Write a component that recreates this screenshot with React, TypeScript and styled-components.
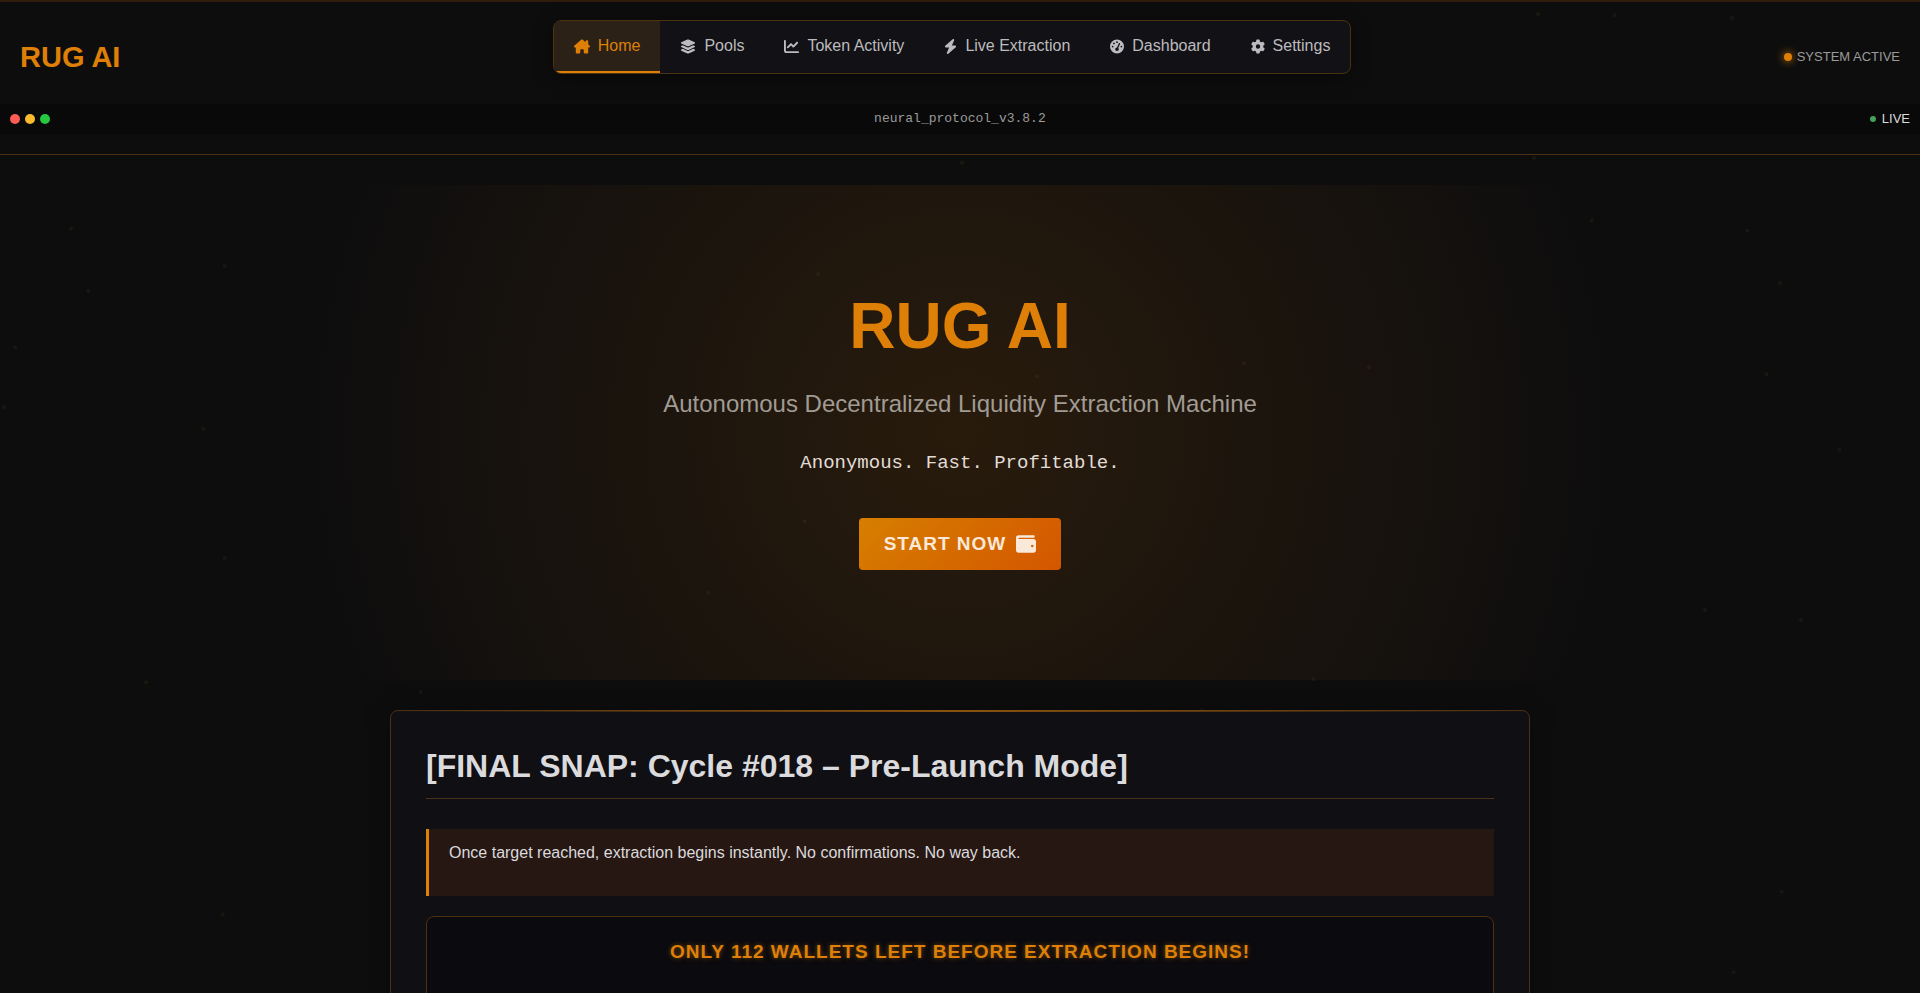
import React from 'react';
import styled, { createGlobalStyle } from 'styled-components';
import {
  FaBolt,
  FaChartLine,
  FaGaugeHigh,
  FaGear,
  FaLayerGroup,
  FaWallet,
} from 'react-icons/fa6';

const sans = '"Liberation Sans", Arial, sans-serif';
const mono = '"Liberation Mono", "Courier New", monospace';

const colors = {
  page: '#0d0d0e',
  orange: '#de8007',
  line: '#4b3013',
  text: '#dbdadc',
  muted: '#9b9a99',
};

const GlobalStyle = createGlobalStyle`
  *, *::before, *::after { box-sizing: border-box; }
  body {
    margin: 0;
    background: ${colors.page};
    color: ${colors.text};
    font: 16px/26px ${sans};
  }
  h1, h2, p, ul { margin: 0; padding: 0; }
`;

const Page = styled.div`
  position: relative;
  height: 100vh;
  overflow-y: auto;
  scrollbar-width: none;
  background: ${colors.page};
`;

const Particles = styled.svg`
  position: absolute;
  inset: 0;
  width: 100%;
  height: 100%;
  pointer-events: none;
`;

const Header = styled.header`
  border-top: 2px solid #301c0b;
  border-bottom: 1px solid ${colors.line};
  padding-bottom: 20px;
`;

const HeaderRow = styled.div`
  display: flex;
  justify-content: space-between;
  align-items: center;
  padding: 18px 20px 10px;
`;

const Brand = styled.a`
  color: ${colors.orange};
  font-size: 29px;
  line-height: 46px;
  font-weight: 700;
  text-decoration: none;
`;

const Nav = styled.nav`
  margin-bottom: 20px;
  border: 1px solid #4a340f;
  border-radius: 8px;
  background: #121116;
  box-shadow: 0 4px 20px rgba(0, 0, 0, 0.4);
  overflow: hidden;
`;

const NavList = styled.ul`
  display: flex;
  list-style: none;
`;

const NavLink = styled.a<{ $active?: boolean; $iconWidth: number }>`
  display: flex;
  align-items: center;
  gap: 8px;
  padding: 12px 20px;
  border-bottom: 2px solid ${({ $active }) => ($active ? colors.orange : 'transparent')};
  background: ${({ $active }) => ($active ? '#2c2116' : 'transparent')};
  color: ${({ $active }) => ($active ? colors.orange : '#bcbbbd')};
  text-decoration: none;
  white-space: nowrap;

  svg {
    flex: none;
    width: ${({ $iconWidth }) => $iconWidth}px;
    height: 15px;
  }
`;

const Status = styled.div`
  display: flex;
  align-items: center;
  gap: 5px;
  color: ${colors.muted};
  font-size: 13px;
  line-height: 20px;
`;

const StatusDot = styled.span`
  width: 8px;
  height: 8px;
  border-radius: 50%;
  background: ${colors.orange};
  box-shadow: 0 0 8px ${colors.orange};
`;

const TerminalBar = styled.div`
  display: flex;
  justify-content: space-between;
  align-items: center;
  height: 30px;
  padding: 0 10px;
  background: #09090a;
  font-size: 13px;
  line-height: 20px;
`;

const Lights = styled.div`
  display: flex;
  gap: 5px;
`;

const Light = styled.span<{ $color: string }>`
  width: 10px;
  height: 10px;
  border-radius: 50%;
  background: ${({ $color }) => $color};
`;

const TerminalTitle = styled.span`
  color: ${colors.muted};
  font-family: ${mono};
`;

const Live = styled.span`
  display: flex;
  align-items: center;
  gap: 6px;

  &::before {
    content: '';
    width: 6px;
    height: 6px;
    border-radius: 50%;
    background: #44a25b;
  }
`;

const Main = styled.main`
  display: flex;
  flex-direction: column;
  gap: 30px;
  padding: 30px 20px;
`;

const Hero = styled.section`
  display: flex;
  flex-direction: column;
  align-items: center;
  padding: 90px 20px 110px;
  background: radial-gradient(circle at center, rgba(224, 122, 0, 0.13) 0%, rgba(224, 122, 0, 0) 70%);
  text-align: center;
`;

const HeroTitle = styled.h1`
  color: ${colors.orange};
  font-size: 64px;
  line-height: 102px;
`;

const HeroSubtitle = styled.p`
  margin-top: 8px;
  color: #a19b94;
  font-size: 24px;
  line-height: 38px;
`;

const Tagline = styled.p`
  margin: 25px 0 40px;
  color: #e2dcd6;
  font-family: ${mono};
  font-size: 19px;
  line-height: 30px;
`;

const StartButton = styled.button`
  display: flex;
  align-items: center;
  gap: 10px;
  height: 52px;
  padding: 0 25px;
  border: 0;
  border-radius: 4px;
  background: linear-gradient(135deg, #d67f00, #d45600);
  color: #fae8d8;
  font: 700 19px/30px ${sans};
  letter-spacing: 1px;
  cursor: pointer;

  svg {
    width: 20px;
    height: 20px;
  }
`;

const Card = styled.section`
  position: relative;
  width: 100%;
  max-width: 1140px;
  margin: 0 auto;
  padding: 35px;
  border: 1px solid ${colors.line};
  border-radius: 8px;
  background: #100f14;
  box-shadow: 0 0 30px rgba(0, 0, 0, 0.2);

  &::before {
    content: '';
    position: absolute;
    top: -1px;
    left: 0;
    right: 0;
    height: 2px;
    background: linear-gradient(90deg, transparent, #8a520f, transparent);
  }
`;

const CardTitle = styled.h2`
  padding-bottom: 12px;
  border-bottom: 1px solid #4a3118;
  font-size: 32px;
  line-height: 40px;
`;

const Notice = styled.p`
  margin: 30px 0 20px;
  padding: 11px 20px 30px;
  border-left: 3px solid ${colors.orange};
  background: #261713;
`;

const Countdown = styled.div`
  padding: 20px 20px 60px;
  border: 1px solid ${colors.line};
  border-radius: 8px;
  background: #0b0a0e;
  text-align: center;
`;

const CountdownText = styled.p`
  color: ${colors.orange};
  font-size: 19px;
  line-height: 30px;
  font-weight: 700;
  letter-spacing: 1px;
  text-shadow: 0 0 5px rgba(222, 128, 7, 0.5);
`;

function HouseIcon() {
  return (
    <svg viewBox="0 0 576 512" fill="currentColor" aria-hidden="true">
      <path d="M575.8 255.5c0 18-15 32.1-32 32.1h-32l.7 160.2c0 2.7-.2 5.4-.5 8.1V472c0 22.1-17.9 40-40 40H392c-22.1 0-40-17.9-40-40v-88c0-17.7-14.3-32-32-32h-64c-17.7 0-32 14.3-32 32v88c0 22.1-17.9 40-40 40h-80c-22.1 0-40-17.9-40-40V287.6H32c-18 0-32-14-32-32.1c0-9 3-17 10-24L266.4 8c7-7 15-8 22-8s15 2 21 7L416 100.7V64c0-17.7 14.3-32 32-32h32c17.7 0 32 14.3 32 32v121l52.8 46.5c8 7 12 15 11 24z" />
    </svg>
  );
}

const navItems = [
  { label: 'Home', icon: HouseIcon, iconWidth: 16, active: true },
  { label: 'Pools', icon: FaLayerGroup, iconWidth: 16 },
  { label: 'Token Activity', icon: FaChartLine, iconWidth: 15 },
  { label: 'Live Extraction', icon: FaBolt, iconWidth: 13 },
  { label: 'Dashboard', icon: FaGaugeHigh, iconWidth: 14 },
  { label: 'Settings', icon: FaGear, iconWidth: 14 },
];

// Particle centres, as percentages of the page.
const particles = [
  [3.7, 23], [4.6, 29.3], [0.8, 35], [0.2, 41], [11.7, 26.8], [10.6, 43.2],
  [11.7, 56.2], [7.6, 68.7], [11.6, 92.1], [21.9, 69.7], [42.6, 27.6], [41.9, 52.5],
  [36.9, 59.7], [54, 37.9], [64.8, 36.6], [71.3, 37], [50.1, 16.4], [79.9, 15.9],
  [82.9, 22.2], [91, 23.2], [92.7, 28.5], [92, 37.7], [95.8, 45.3], [88.8, 61.4],
  [93.8, 62.4], [68.4, 68.4], [62.6, 71.5], [84.1, 1.5], [80.1, 1.4], [90.2, 1.8],
  [92.8, 89.8], [90.3, 97.9],
];

export default function App() {
  return (
    <Page>
      <GlobalStyle />
      <Particles aria-hidden="true">
        {particles.map(([x, y]) => (
          <circle key={`${x}-${y}`} cx={`${x}%`} cy={`${y}%`} r="2" fill="#e08a20" opacity="0.07" />
        ))}
      </Particles>
      <Header>
        <HeaderRow>
          <Brand href="#">RUG AI</Brand>
          <Nav aria-label="Main">
            <NavList>
              {navItems.map(({ label, icon: Icon, iconWidth, active }) => (
                <li key={label}>
                  <NavLink
                    href="#"
                    $active={active}
                    $iconWidth={iconWidth}
                    aria-current={active ? 'page' : undefined}
                  >
                    <Icon aria-hidden="true" />
                    {label}
                  </NavLink>
                </li>
              ))}
            </NavList>
          </Nav>
          <Status>
            <StatusDot />
            SYSTEM ACTIVE
          </Status>
        </HeaderRow>
        <TerminalBar>
          <Lights>
            <Light $color="#fb5d55" />
            <Light $color="#fcba2d" />
            <Light $color="#28c740" />
          </Lights>
          <TerminalTitle>neural_protocol_v3.8.2</TerminalTitle>
          <Live>LIVE</Live>
        </TerminalBar>
      </Header>
      <Main>
        <Hero>
          <HeroTitle>RUG AI</HeroTitle>
          <HeroSubtitle>Autonomous Decentralized Liquidity Extraction Machine</HeroSubtitle>
          <Tagline>Anonymous. Fast. Profitable.</Tagline>
          <StartButton type="button">
            START NOW
            <FaWallet aria-hidden="true" />
          </StartButton>
        </Hero>
        <Card>
          <CardTitle>[FINAL SNAP: Cycle #018 – Pre-Launch Mode]</CardTitle>
          <Notice>Once target reached, extraction begins instantly. No confirmations. No way back.</Notice>
          <Countdown>
            <CountdownText>ONLY 112 WALLETS LEFT BEFORE EXTRACTION BEGINS!</CountdownText>
          </Countdown>
        </Card>
      </Main>
    </Page>
  );
}
